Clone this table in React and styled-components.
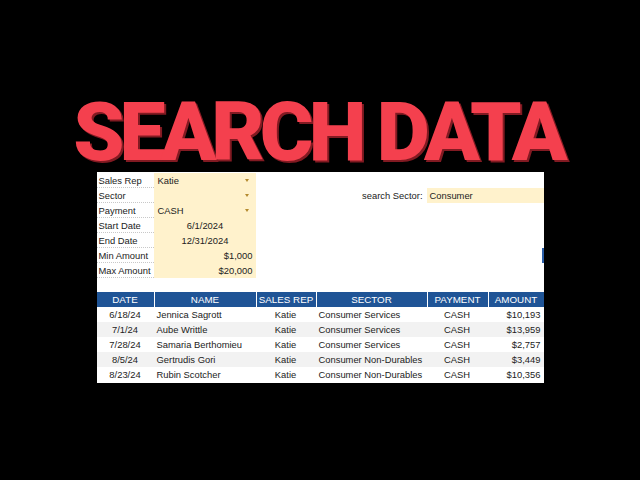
import React from "react";
import styled, { createGlobalStyle } from "styled-components";

const GlobalStyle = createGlobalStyle`
  html, body {
    margin: 0;
    padding: 0;
    background: #000;
  }
  body {
    width: 640px;
    height: 480px;
    overflow: hidden;
  }
`;

const Page = styled.div`
  width: 640px;
  height: 480px;
  background: #000;
  display: flex;
  flex-direction: column;
  align-items: center;
  padding-top: 92px;
  box-sizing: border-box;
`;

const Title = styled.h1`
  margin: 0 0 0 -4px;
  height: 80px;
  line-height: 80px;
  font-family: "Roboto", "Inter", sans-serif;
  font-weight: 900;
  font-size: 82px;
  letter-spacing: -5px;
  color: #f4404e;
  text-shadow: 2px 2px 0 #821a22;
  white-space: nowrap;
`;

const Sheet = styled.div`
  width: 447px;
  background: #fff;
  padding: 1px 0 1px;
  font-family: "Liberation Sans", Arial, sans-serif;
  font-size: 9.4px;
  color: #222;
  display: flex;
  flex-direction: column;
  gap: 14px;
`;

const Top = styled.div`
  display: grid;
  grid-template-columns: 57px 102px 1fr 117px;
  grid-auto-rows: 15px;
`;

const Label = styled.div`
  grid-column: 1;
  padding-left: 2px;
  display: flex;
  align-items: center;
  border-bottom: 1px dotted #c8c8c8;
  box-sizing: border-box;
  white-space: nowrap;
  overflow: hidden;
`;

const Value = styled.div`
  grid-column: 2;
  background: #fff2cc;
  display: flex;
  align-items: center;
  justify-content: ${(p) =>
    p.$align === "center" ? "center" : p.$align === "right" ? "flex-end" : "space-between"};
  padding: 0 3px 0 4px;
  box-sizing: border-box;
  white-space: nowrap;
`;

const Arrow = styled.span`
  width: 0;
  height: 0;
  margin-right: 4px;
  border-left: 2.5px solid transparent;
  border-right: 2.5px solid transparent;
  border-top: 3px solid #b48a2e;
`;

const SearchLabel = styled.div`
  grid-column: 3;
  grid-row: 2;
  display: flex;
  align-items: center;
  justify-content: flex-end;
  padding-right: 4px;
`;

const SearchInput = styled.div`
  grid-column: 4;
  grid-row: 2;
  background: #fff2cc;
  display: flex;
  align-items: center;
  padding-left: 3px;
`;

const EdgeMark = styled.div`
  grid-column: 4;
  grid-row: 6;
  justify-self: end;
  width: 2px;
  background: #2a5ea8;
`;

const Table = styled.div`
  display: grid;
  grid-template-columns: 57px 102px 60px 111px 61px 56px;
  grid-auto-rows: 15px;
`;

const Head = styled.div`
  background: #1f5496;
  color: #fff;
  font-size: 9.8px;
  display: flex;
  align-items: center;
  justify-content: center;
  white-space: nowrap;
  border-left: ${(p) => (p.$first ? "none" : "1px solid #fff")};
`;

const Cell = styled.div`
  background: ${(p) => (p.$shade ? "#f2f2f2" : "#fff")};
  display: flex;
  align-items: center;
  justify-content: ${(p) =>
    p.$align === "center" ? "center" : p.$align === "right" ? "flex-end" : "flex-start"};
  padding: ${(p) => (p.$align === "right" ? "0 3px 0 0" : p.$align === "left" ? "0 0 0 3px" : "0")};
  white-space: nowrap;
`;

const form = [
  { label: "Sales Rep", value: "Katie", drop: true },
  { label: "Sector", value: "", drop: true },
  { label: "Payment", value: "CASH", drop: true },
  { label: "Start Date", value: "6/1/2024", align: "center" },
  { label: "End Date", value: "12/31/2024", align: "center" },
  { label: "Min Amount", value: "$1,000", align: "right" },
  { label: "Max Amount", value: "$20,000", align: "right" },
];

const headers = ["DATE", "NAME", "SALES REP", "SECTOR", "PAYMENT", "AMOUNT"];
const aligns = ["center", "left", "center", "left", "center", "right"];

const rows = [
  ["6/18/24", "Jennica Sagrott", "Katie", "Consumer Services", "CASH", "$10,193"],
  ["7/1/24", "Aube Writtle", "Katie", "Consumer Services", "CASH", "$13,959"],
  ["7/28/24", "Samaria Berthomieu", "Katie", "Consumer Services", "CASH", "$2,757"],
  ["8/5/24", "Gertrudis Gori", "Katie", "Consumer Non-Durables", "CASH", "$3,449"],
  ["8/23/24", "Rubin Scotcher", "Katie", "Consumer Non-Durables", "CASH", "$10,356"],
];

export default function App() {
  return (
    <>
      <GlobalStyle />
      <Page>
        <Title>SEARCH DATA</Title>
        <Sheet>
          <Top>
            {form.map((f, i) => (
              <React.Fragment key={f.label}>
                <Label style={{ gridRow: i + 1 }}>{f.label}</Label>
                <Value style={{ gridRow: i + 1 }} $align={f.align}>
                  {f.align ? f.value : <span>{f.value}</span>}
                  {f.drop && <Arrow />}
                </Value>
              </React.Fragment>
            ))}
            <SearchLabel>search Sector:</SearchLabel>
            <SearchInput>Consumer</SearchInput>
            <EdgeMark />
          </Top>
          <Table>
            {headers.map((h, i) => (
              <Head key={h} $first={i === 0}>
                {h}
              </Head>
            ))}
            {rows.map((r, ri) =>
              r.map((c, ci) => (
                <Cell key={ri + "-" + ci} $shade={ri % 2 === 1} $align={aligns[ci]}>
                  {c}
                </Cell>
              ))
            )}
          </Table>
        </Sheet>
      </Page>
    </>
  );
}
